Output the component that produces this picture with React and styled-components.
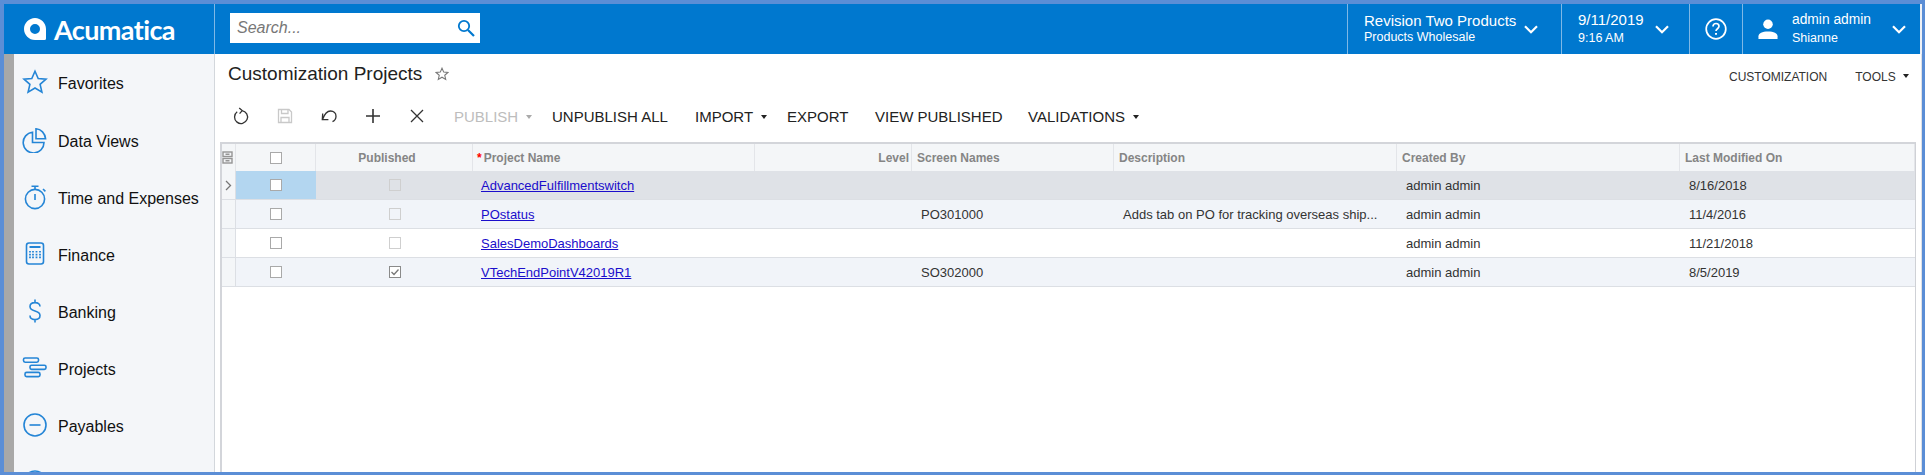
import { createGlobalStyle, styled } from "styled-components";

const GlobalStyle = createGlobalStyle`
    html, body {
        margin: 0;
        padding: 0;
        width: 1925px;
        height: 475px;
        overflow: hidden;
        background: #5b8ed6;
        font-family: "Liberation Sans", Arial, sans-serif;
    }
    * {
        box-sizing: border-box;
    }
`;

const BLUE = "#0078cf";
const ICON_BLUE = "#2485d6";
const COLUMNS = "14px 80px 157px 282px 157px 202px 283px 283px 235px";

const NAV_ITEMS = [
    { label: "Favorites", icon: "star" },
    { label: "Data Views", icon: "pie" },
    { label: "Time and Expenses", icon: "timer" },
    { label: "Finance", icon: "calc" },
    { label: "Banking", icon: "dollar" },
    { label: "Projects", icon: "gantt" },
    { label: "Payables", icon: "minus" },
    { label: "", icon: "plus" }, // only the top of this icon shows, its label is below the fold
];

const ROWS = [
    { name: "AdvancedFulfillmentswitch", screen: "", desc: "", date: "8/16/2018", published: false, tone: "active" },
    { name: "POstatus", screen: "PO301000", desc: "Adds tab on PO for tracking overseas ship...", date: "11/4/2016", published: false, tone: "alt" },
    { name: "SalesDemoDashboards", screen: "", desc: "", date: "11/21/2018", published: false, tone: "plain" },
    { name: "VTechEndPointV42019R1", screen: "SO302000", desc: "", date: "8/5/2019", published: true, tone: "alt" },
];

const NavIcon = ({ type }) => {
    const common = { fill: "none", stroke: ICON_BLUE, strokeWidth: 1.6 };
    return (
        <svg width="26" height="26" viewBox="0 0 26 26" {...common}>
            {type === "star" && <path d="M13 2.2l3.2 7.3 7.8.7-5.9 5.2 1.8 7.7L13 19l-6.9 4.1 1.8-7.7L2 10.2l7.8-.7z" />}
            {type === "pie" && (
                <>
                    <path d="M10.5 5.2A10.4 10.4 0 1 0 22 15.5H10.5z" />
                    <path d="M14 1.8c5.2.4 9 4.4 9.6 10H14z" />
                </>
            )}
            {type === "timer" && (
                <>
                    <circle cx="13" cy="15" r="9.6" />
                    <path d="M9.5 2.2h7M13 2.2v3M13 10v6M21 5l2.4 2.4" />
                </>
            )}
            {type === "calc" && (
                <>
                    <rect x="4.5" y="2" width="17" height="21" rx="2.5" />
                    <path d="M7.5 6h11" strokeWidth="2" />
                    <path d="M8 10v8.5M11 10v8.5M14.5 10v8.5M18 10v8.5" strokeDasharray="1.6 1.2" strokeWidth="1.8" />
                </>
            )}
            {type === "dollar" && <path d="M18 8.6c0-2.6-2-4-5-4s-5 1.4-5 4 2 3.6 5 4.4 5 1.9 5 4.6-2 4-5 4-5-1.4-5-4M13 1.5v3M13 21.6v3" />}
            {type === "gantt" && (
                <>
                    <rect x="1.5" y="3" width="15" height="4.2" rx="1.6" />
                    <rect x="8" y="10.2" width="16" height="4.2" rx="1.6" />
                    <rect x="3" y="17.4" width="15" height="4.2" rx="1.6" />
                </>
            )}
            {type === "minus" && (
                <>
                    <circle cx="13" cy="13" r="11" />
                    <path d="M7.5 13h11" />
                </>
            )}
            {type === "plus" && (
                <>
                    <circle cx="13" cy="13" r="11" />
                    <path d="M7.5 13h11M13 7.5v11" />
                </>
            )}
        </svg>
    );
};

const Chevron = () => (
    <svg width="14" height="9" viewBox="0 0 14 9" fill="none" stroke="#fff" strokeWidth="2.2">
        <path d="M1 1.2l6 6 6-6" />
    </svg>
);

const ToolIcon = ({ type }) => {
    const stroke = type === "save" ? "#c9c9c9" : "#333";
    return (
        <svg width="18" height="18" viewBox="0 0 18 18" fill="none" stroke={stroke} strokeWidth="1.3">
            {type === "refresh" && <path d="M5.2 4.8A6.5 6.5 0 1 0 10 3.6M7.2 1l3 2.6-2.600 3" />}
            {type === "save" && (
                <>
                    <path d="M3 2.5h10l2.5 2.5v10.5H2.5v-13z" />
                    <path d="M5.5 2.5v4h6.500v-4M5 15.500v-5h8v5" />
                </>
            )}
            {type === "undo" && <path d="M2.500 12.500C4.500 7 7 4 10.500 4c3.300 0 5.500 2.300 5.500 5.200 0 2.500-1.500 4.500-3.500 5.500M2.700 6.500L2.300 12.700 8.400 12.600" />}
            {type === "plus" && <path d="M9 2v14M2 9h14" strokeWidth="1.6" />}
            {type === "close" && <path d="M3 3l12 12M15 3L3 15" />}
        </svg>
    );
};

const App = () => {
    return (
        <Frame>
            <GlobalStyle />
            <TopBar>
                <LogoBlock>
                    <svg width="22" height="22" viewBox="0 0 22 22">
                        <path
                            fillRule="evenodd"
                            fill="#fff"
                            d="M11 0C17 0 22 5 22 11V20.500Q22 22 20.500 22H11C5 22 0 17 0 11S5 0 11 0ZM11 6A5 5 0 1 0 11 16 5 5 0 1 0 11 6Z"
                        />
                    </svg>
                    <LogoText>Acumatica</LogoText>
                </LogoBlock>
                <SearchArea>
                    <SearchBox>
                        <SearchText>Search...</SearchText>
                        <svg width="18" height="18" viewBox="0 0 18 18" fill="none" stroke={BLUE} strokeWidth="1.800">
                            <circle cx="7" cy="7" r="5.200" />
                            <path d="M11 11l6 6" strokeWidth="2.200" />
                        </svg>
                    </SearchBox>
                </SearchArea>
                <TopCell $width={214} $padRight={23}>
                    <TwoLines>
                        <TopLine $tight>Revision Two Products</TopLine>
                        <SubLine>Products Wholesale</SubLine>
                    </TwoLines>
                    <Chevron />
                </TopCell>
                <TopCell $width={128} $padRight={20}>
                    <TwoLines>
                        <TopLine>9/11/2019</TopLine>
                        <SubLine>9:16 AM</SubLine>
                    </TwoLines>
                    <Chevron />
                </TopCell>
                <HelpCell>
                    <svg width="22" height="22" viewBox="0 0 22 22" fill="none" stroke="#fff" strokeWidth="1.700">
                        <circle cx="11" cy="11" r="9.800" />
                        <path d="M8 8.500c0-1.800 1.300-3 3-3s3 1.100 3 2.800c0 2.400-3 2.400-3 4.700" />
                        <path d="M11 15v1.800" strokeWidth="2" />
                    </svg>
                </HelpCell>
                <UserCell>
                    <svg width="20" height="21" viewBox="0 0 20 22" fill="#fff">
                        <circle cx="10" cy="5.500" r="5" />
                        <path d="M0 21v-3c0-3 4-5 10-5s10 2 10 5v3z" />
                    </svg>
                    <TwoLines>
                        <TopLine $small>admin admin</TopLine>
                        <SubLine>Shianne</SubLine>
                    </TwoLines>
                    <Chevron />
                </UserCell>
            </TopBar>
            <Body>
                <Rail />
                <Sidebar>
                    {NAV_ITEMS.map((item) => (
                        <NavItem key={item.icon}>
                            <NavIconBox>
                                <NavIcon type={item.icon} />
                            </NavIconBox>
                            {item.label && <NavLabel>{item.label}</NavLabel>}
                        </NavItem>
                    ))}
                </Sidebar>
                <Main>
                    <TitleRow>
                        <TitleGroup>
                            <Title>Customization Projects</Title>
                            <svg width="14" height="14" viewBox="0 0 26 26" fill="none" stroke="#777" strokeWidth="2">
                                <path d="M13 2.200l3.200 7.300 7.800.7-5.900 5.200 1.800 7.700L13 19l-6.900 4.100 1.800-7.700L2 10.200l7.800-.7z" />
                            </svg>
                        </TitleGroup>
                        <TitleActions>
                            <SmallAction>CUSTOMIZATION</SmallAction>
                            <SmallAction>
                                TOOLS <Caret />
                            </SmallAction>
                        </TitleActions>
                    </TitleRow>
                    <Toolbar>
                        <IconSet>
                            {["refresh", "save", "undo", "plus", "close"].map((type) => (
                                <IconSlot key={type}>
                                    <ToolIcon type={type} />
                                </IconSlot>
                            ))}
                        </IconSet>
                        <ToolText $disabled $width={98}>
                            PUBLISH <Caret $disabled />
                        </ToolText>
                        <ToolText $width={143}>UNPUBLISH ALL</ToolText>
                        <ToolText $width={92}>
                            IMPORT <Caret />
                        </ToolText>
                        <ToolText $width={88}>EXPORT</ToolText>
                        <ToolText $width={153}>VIEW PUBLISHED</ToolText>
                        <ToolText>
                            VALIDATIONS <Caret />
                        </ToolText>
                    </Toolbar>
                    <Grid>
                        <HeaderRow>
                            <HeadCell $gutter>
                                <svg width="11" height="13" viewBox="0 0 11 13" fill="none" stroke="#959595" strokeWidth="1.400">
                                    <rect x="1" y="1" width="9" height="4.500" />
                                    <rect x="1" y="7.500" width="9" height="4.500" />
                                    <path d="M3.500 3.200h4M3.500 9.700h4" />
                                </svg>
                            </HeadCell>
                            <HeadCell $center>
                                <Check />
                            </HeadCell>
                            <HeadCell $center $shifted>
                                Published
                            </HeadCell>
                            <HeadCell $tight>
                                <Required>*</Required>Project Name
                            </HeadCell>
                            <HeadCell $right>Level</HeadCell>
                            <HeadCell>Screen Names</HeadCell>
                            <HeadCell>Description</HeadCell>
                            <HeadCell>Created By</HeadCell>
                            <HeadCell>Last Modified On</HeadCell>
                        </HeaderRow>
                        {ROWS.map((row) => (
                            <DataRow key={row.name} $tone={row.tone}>
                                <GutterCell>
                                    {row.tone === "active" && (
                                        <svg width="7" height="11" viewBox="0 0 7 11" fill="none" stroke="#777" strokeWidth="1.300">
                                            <path d="M1 1l4.500 4.500L1 10" />
                                        </svg>
                                    )}
                                </GutterCell>
                                <Cell $center $selected={row.tone === "active"}>
                                    <Check $filled />
                                </Cell>
                                <Cell $center>
                                    <Check $muted={!row.published} $checked={row.published} />
                                </Cell>
                                <Cell>
                                    <ProjectLink href="#">{row.name}</ProjectLink>
                                </Cell>
                                <Cell />
                                <Cell>{row.screen}</Cell>
                                <Cell>{row.desc}</Cell>
                                <Cell>admin admin</Cell>
                                <Cell>{row.date}</Cell>
                            </DataRow>
                        ))}
                    </Grid>
                </Main>
            </Body>
        </Frame>
    );
};

export default App;

const Frame = styled.div`
    width: 1925px;
    height: 475px;
    padding: 4px 3px 3px 4px;
    display: flex;
    flex-direction: column;
    background: #5b8ed6;
    overflow: hidden;
`;

const TopBar = styled.div`
    height: 50px;
    flex: none;
    display: flex;
    background: ${BLUE};
    border-right: 2px solid #eef1f6;
    color: #fff;
`;

const LogoBlock = styled.div`
    width: 211px;
    display: flex;
    align-items: center;
    gap: 8px;
    padding-left: 20px;
    border-right: 1px solid #7fb8e6;
`;

const LogoText = styled.span`
    font-family: Lato, sans-serif;
    font-size: 27px;
    font-weight: 700;
    letter-spacing: -0.6px;
    line-height: 1;
`;

const SearchArea = styled.div`
    flex: 1;
    padding: 9px 0 0 15px;
`;

const SearchBox = styled.div`
    width: 250px;
    height: 30px;
    background: #fff;
    display: flex;
    align-items: center;
    justify-content: space-between;
    padding: 0 5px 0 7px;
`;

const SearchText = styled.span`
    font-size: 16px;
    font-style: italic;
    color: #777;
`;

const TopCell = styled.div`
    width: ${({ $width }) => $width}px;
    display: flex;
    align-items: center;
    justify-content: space-between;
    padding: 0 ${({ $padRight }) => $padRight}px 0 16px;
    border-left: 1px solid #7fb8e6;
`;

const HelpCell = styled.div`
    width: 53px;
    display: flex;
    align-items: center;
    justify-content: center;
    border-left: 1px solid #7fb8e6;
`;

const UserCell = styled.div`
    width: 178px;
    display: flex;
    align-items: center;
    padding: 0 14px 0 15px;
    gap: 14px;
    border-left: 1px solid #7fb8e6;

    svg:last-child {
        margin-left: auto;
    }
`;

const TwoLines = styled.div`
    display: flex;
    flex-direction: column;
    margin-bottom: 2px;
`;

const TopLine = styled.span`
    font-size: ${({ $small }) => ($small ? "13.8px" : "15px")};
    line-height: 18px;
    margin-bottom: ${({ $tight }) => ($tight ? "0" : "2px")};
`;

const SubLine = styled.span`
    font-size: 12.5px;
    line-height: 15px;
`;

const Body = styled.div`
    flex: 1;
    display: flex;
    min-height: 0;
`;

const Rail = styled.div`
    width: 10px;
    flex: none;
    background: #a8a8a8;
`;

const Sidebar = styled.nav`
    width: 201px;
    flex: none;
    background: #f4f6f9;
    border-right: 1px solid #d3d7dc;
    overflow: hidden;
`;

const NavItem = styled.div`
    height: 57px;
    display: flex;
    align-items: center;
    padding-left: 8px;

    &:first-child {
        height: 59px;
    }
`;

const NavIconBox = styled.span`
    width: 36px;
    height: 26px;
    flex: none;
    display: flex;
    margin-bottom: 4px;
`;

const NavLabel = styled.span`
    font-size: 16px;
    color: #111;
`;

const Main = styled.main`
    flex: 1;
    min-width: 0;
    background: #fff;
    padding-left: 5px;
    display: flex;
    flex-direction: column;
    border-right: 1px solid #dfe1e5;
`;

const TitleRow = styled.div`
    height: 39px;
    display: flex;
    align-items: center;
    justify-content: space-between;
    padding: 0 12px 0 8px;
`;

const TitleGroup = styled.div`
    display: flex;
    align-items: center;
    gap: 13px;
`;

const Title = styled.h1`
    margin: 0;
    font-size: 19px;
    font-weight: 400;
    color: #222;
`;

const TitleActions = styled.div`
    display: flex;
    gap: 28px;
    margin-top: 7px;
`;

const SmallAction = styled.span`
    font-size: 12px;
    color: #333;
`;

const Toolbar = styled.div`
    height: 49px;
    display: flex;
    align-items: center;
    padding-bottom: 3px;
`;

const IconSet = styled.div`
    display: flex;
    width: 235px;
    margin-left: -1px;
`;

const IconSlot = styled.span`
    width: 44px;
    display: flex;
    justify-content: center;
`;

const ToolText = styled.span`
    width: ${({ $width }) => ($width ? `${$width}px` : "auto")};
    font-size: 15px;
    white-space: nowrap;
    color: ${({ $disabled }) => ($disabled ? "#bdbdbd" : "#222")};
`;

const Caret = styled.i`
    display: inline-block;
    margin-left: 4px;
    vertical-align: 3px;
    border-left: 3.500px solid transparent;
    border-right: 3.500px solid transparent;
    border-top: 4px solid ${({ $disabled }) => ($disabled ? "#aaa" : "#222")};
`;

const Grid = styled.div`
    flex: 1;
    width: 1696px;
    border-left: 2px solid #d3d5da;
    border-top: 2px solid #d3d5da;
    border-right: 1px solid #cfd1d6;
`;

const HeaderRow = styled.div`
    display: grid;
    grid-template-columns: ${COLUMNS};
    height: 27px;
    background: #f4f6f8;
`;

const headPadding = ({ $gutter, $shifted, $tight, $right }) => {
    if ($gutter) return "0";
    if ($shifted) return "0 14px 0 0";
    if ($tight) return "0 5px 0 4px";
    if ($right) return "0 2px 0 5px";
    return "0 4px 0 5px";
};

const HeadCell = styled.div`
    display: flex;
    align-items: center;
    justify-content: ${({ $center, $right }) => ($center ? "center" : $right ? "flex-end" : "flex-start")};
    padding: ${headPadding};
    font-size: 12px;
    font-weight: 700;
    color: #858585;
    border-right: 1px solid #e3e5e9;
    white-space: nowrap;
`;

const Required = styled.span`
    color: #f00;
    margin-right: 2px;
`;

const TONES = {
    active: "#dfe2e7",
    alt: "#f1f4f9",
    plain: "#fff",
};

const DataRow = styled.div`
    display: grid;
    grid-template-columns: ${COLUMNS};
    height: 29px;
    background: ${({ $tone }) => TONES[$tone]};
    border-bottom: 1px solid #dcdfe4;
`;

const GutterCell = styled.div`
    display: flex;
    align-items: center;
    justify-content: center;
    background: #f4f6f8;
    border-right: 1px solid #dcdfe4;
`;

const Cell = styled.div`
    display: flex;
    align-items: center;
    justify-content: ${({ $center }) => ($center ? "center" : "flex-start")};
    padding: ${({ $center }) => ($center ? "0" : "1px 9px 0")};
    font-size: 13px;
    color: #333;
    white-space: nowrap;
    background: ${({ $selected }) => ($selected ? "#b3d6f0" : "transparent")};
`;

const ProjectLink = styled.a`
    color: #1a0dcb;
    font-size: 13px;
    margin-left: -1px;
`;

const Check = ({ $muted, $checked, $filled }) => (
    <CheckBox $muted={$muted} $checked={$checked} $filled={$filled}>
        {$checked && (
            <svg width="10" height="10" viewBox="0 0 10 10" fill="none" stroke="#777" strokeWidth="1.300">
                <path d="M1.500 5l2.500 2.500 4.500-5" />
            </svg>
        )}
    </CheckBox>
);

const CheckBox = styled.span`
    width: 12px;
    height: 12px;
    display: flex;
    align-items: center;
    justify-content: center;
    background: ${({ $muted }) => ($muted ? "transparent" : "#fff")};
    border: 1px solid ${({ $muted, $checked }) => ($muted ? "#cfcfcf" : $checked ? "#8a8a8a" : "#a9a9a9")};
`;
